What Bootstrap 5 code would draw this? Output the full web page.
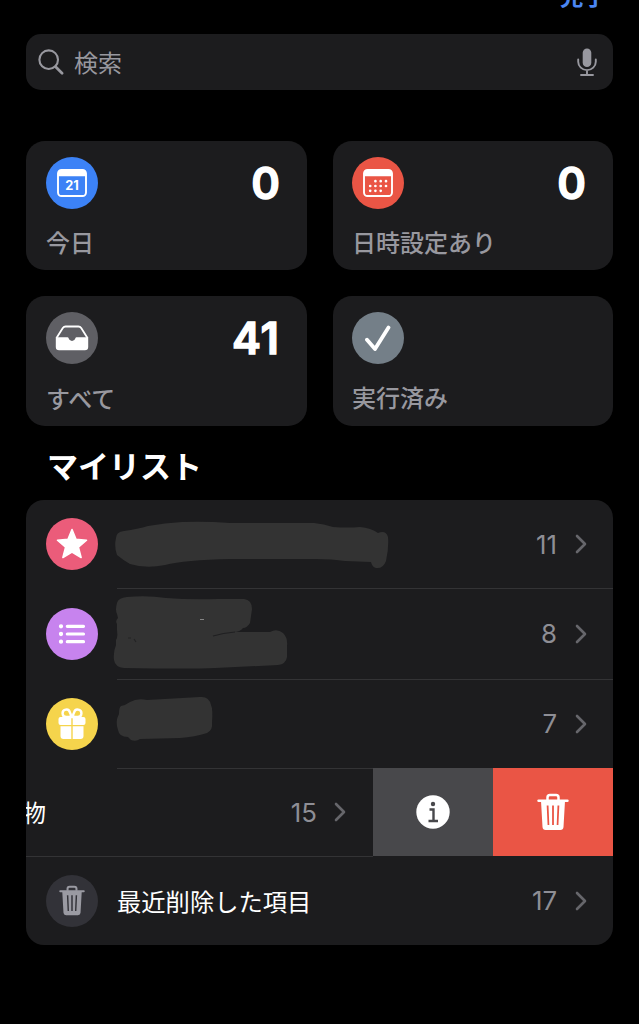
<!DOCTYPE html>
<html lang="ja" data-bs-theme="dark">
<head>
<meta charset="utf-8">
<meta name="viewport" content="width=device-width, initial-scale=1">
<title>リマインダー</title>
<link href="https://cdn.jsdelivr.net/npm/bootstrap@5.3.0/dist/css/bootstrap.min.css" rel="stylesheet">
<style>
body{background:#000;color:#fff;font-family:Inter,"Noto Sans CJK JP",sans-serif;height:1024px;overflow:hidden}
svg{display:block;flex:none}
.screen{padding:0 26px}
.topbar{height:34px;overflow:hidden;padding-right:6px}
.done{color:#4b86f3;font-size:23.5px;font-weight:700;line-height:30px;margin-top:-18px}
.search{height:56px;background:#1c1c1e;border-radius:15px;color:#98989f;padding:0 16px 0 12px;font-size:24px}
.search-hint{margin-left:9px;padding-top:3px}
.tiles{display:grid;grid-template-columns:281px 280px;grid-template-rows:129px 130px;gap:26px;margin-top:51px}
.tile{background:#1c1c1e;border-radius:19px;padding:16px 27px 0 20px}
.tile:nth-child(even){padding-left:19px}
.disc{width:52px;height:52px;border-radius:50%;flex:none;display:flex;align-items:center;justify-content:center}
.blue{background:#3c82f6}.red{background:#ea5545}.grey{background:#5f5f64}.slate{background:#747f88}
.pink{background:#eb5c7a}.purple{background:#c783ee}.yellow{background:#f5d44c}.dim{background:#323238}
.total{font-size:43.5px;font-weight:600;line-height:53px;-webkit-text-stroke:1.4px #fff}
.total-wide{letter-spacing:1px}
.tile-label{font-size:24px;font-weight:500;color:#98989f;line-height:32px;margin-top:18px}
.tiles .low{margin-top:19px}
.heading{font-size:31px;font-weight:700;line-height:40px;margin:21px 0 13px 21px}
.lists{background:#1c1c1e;border-radius:18px;overflow:hidden}
.item{padding-left:20px}
.item-body{margin-left:19px;padding-right:26px;box-shadow:0 1px 0 #333335;font-size:24.3px}
.h88{height:88px}.h89{height:89px}.h91{height:91px}
.amount{color:#8e8e95;font-size:25.8px;margin-right:18px;padding-top:2px}
.scribble{margin-left:-4px}
.swiped{width:347px;padding-right:27px;font-size:24px;box-shadow:0 1px 0 #333335}
.swiped .cut{margin-left:-4px;padding-top:3px}
.swiped .amount{margin-right:17px}
.act{width:120px}
.info{background:#48484b}
.last-body{box-shadow:none}
.last-title{padding-top:3px}
</style>
</head>
<body>
<svg width="0" height="0" class="d-none">
  <symbol id="chev" viewBox="0 0 12 20"><path d="M2 2 10 10l-8 8" fill="none" stroke="#66666b" stroke-width="2.600" stroke-linecap="round" stroke-linejoin="round"/></symbol>
  <symbol id="trash" viewBox="0 0 32 38"><path d="M10.500 7V4.500Q10.500 2 13 2h6q2.500 0 2.500 2.500V7" fill="none" stroke="currentColor" stroke-width="2.500"/><path d="M1.500 7.700h29" stroke="currentColor" stroke-width="2.400" stroke-linecap="round"/><path fill="currentColor" fill-rule="evenodd" d="M4 8h24l-1.500 26q-.2 3-3.200 3H8.700q-3 0-3.200-3ZM9.700 12.500l.9 19.500h1.700l-.8-19.500ZM15.100 12.500V32h1.800V12.500ZM20.500 12.500 19.700 32h1.700l.9-19.500Z"/></symbol>
</svg>
<main class="screen">
  <header class="topbar d-flex justify-content-end align-items-start"><span class="done">完了</span></header>

  <div class="search d-flex align-items-center">
    <svg width="27" height="27" viewBox="0 0 27 27" fill="none" stroke="currentColor" stroke-linecap="round"><circle cx="10.700" cy="10.700" r="9.300" stroke-width="2.100"/><path d="m17.600 17.700 6.500 6.500" stroke-width="2.800"/></svg>
    <span class="search-hint">検索</span>
    <svg class="ms-auto" width="20" height="30" viewBox="0 0 20 30"><rect x="5.700" y="1.500" width="8.600" height="18.500" rx="4.300" fill="#98989f"/><path d="M1.200 12.500V14.800a8.800 8.300 0 0 0 17.600 0V12.500M10 23.200V28M4 28h12" fill="none" stroke="#98989f" stroke-width="1.900" stroke-linecap="round"/></svg>
  </div>

  <section class="tiles">
    <div class="tile">
      <div class="d-flex justify-content-between">
        <span class="disc blue"><svg width="30" height="28" viewBox="0 0 30 28"><rect x="1" y="1" width="28" height="26" rx="3.500" fill="none" stroke="#fff" stroke-width="1.900"/><path d="M1 7.300V4q0-3 3-3h22q3 0 3 3v3.300Z" fill="#fff"/><text x="15" y="21.300" text-anchor="middle" font-size="12.800" font-weight="700" fill="#fff">21</text></svg></span>
        <span class="total">0</span>
      </div>
      <div class="tile-label">今日</div>
    </div>
    <div class="tile">
      <div class="d-flex justify-content-between">
        <span class="disc red"><svg width="30" height="28" viewBox="0 0 30 28"><rect x="1" y="1" width="28" height="26" rx="3.500" fill="none" stroke="#fff" stroke-width="1.900"/><path d="M1 7.300V4q0-3 3-3h22q3 0 3 3v3.300Z" fill="#fff"/><path d="M12.400 12.200h.01M17.700 12.200h.01M23 12.200h.01M7.200 17h.01M12.400 17h.01M17.700 17h.01M23 17h.01M7.200 21.800h.01M12.400 21.800h.01M17.700 21.800h.01" stroke="#fff" stroke-width="2.700" stroke-linecap="round"/></svg></span>
        <span class="total">0</span>
      </div>
      <div class="tile-label">日時設定あり</div>
    </div>
    <div class="tile">
      <div class="d-flex justify-content-between">
        <span class="disc grey"><svg width="34" height="26" viewBox="0 0 34 26"><path d="M1.500 13 7.800 3q1-1.500 2.800-1.500h12.800q1.800 0 2.800 1.500l6.300 10" fill="none" stroke="#fff" stroke-width="1.800"/><path d="M.8 12.300h11.700q.9 0 1.100 1a3.500 3.500 0 0 0 6.800 0q.2-1 1.100-1h11.700V22q0 3.300-3.300 3.300H4.100Q.8 25.300.8 22Z" fill="#fff"/></svg></span>
        <span class="total total-wide">41</span>
      </div>
      <div class="tile-label low">すべて</div>
    </div>
    <div class="tile">
      <span class="disc slate"><svg width="26" height="26" viewBox="0 0 26 26"><path d="m2 14.800 8 9.200L23.500 2.500" fill="none" stroke="#fff" stroke-width="3.800" stroke-linecap="round" stroke-linejoin="round"/></svg></span>
      <div class="tile-label low">実行済み</div>
    </div>
  </section>

  <h2 class="heading">マイリスト</h2>

  <section class="lists">
    <div class="item h88 d-flex align-items-center">
      <span class="disc pink"><svg width="32" height="32" viewBox="0 0 32 32"><path d="m16 1.500 4 9.900 10.500.8-8.100 7 2.700 10.300L16 24l-9.100 5.500 2.700-10.300-8.100-7 10.500-.8Z" fill="#fff" stroke="#fff" stroke-width="1.600" stroke-linejoin="round"/></svg></span>
      <div class="item-body h88 flex-grow-1 d-flex align-items-center">
        <svg class="scribble" width="280" height="88" viewBox="113 500 280 88"><path fill="#333" d="M116 538Q116 532 124 531Q138 529 148 526Q165 523 182 522Q205 521 230 523L314 523Q324 524 333 527Q347 528 360 527Q371 528 378 533Q386 530 388 537Q389 547 386 561Q383 569 376 568Q372 567 371 562L345 561Q333 559 315 559L230 559Q185 560 165 565Q146 569 130 564Q123 560 117 555Q114 547 116 538Z"/></svg>
        <span class="amount ms-auto">11</span><svg width="12" height="20"><use href="#chev"/></svg>
      </div>
    </div>
    <div class="item h91 d-flex align-items-center">
      <span class="disc purple"><svg width="28" height="22" viewBox="0 0 28 22"><path d="M9.300 3.300h16.200M9.300 11h16.200M9.300 18.700h16.200" stroke="#fff" stroke-width="3.200" stroke-linecap="round"/><path d="M3 3.300h.01M3 11h.01M3 18.700h.01" stroke="#fff" stroke-width="4.300" stroke-linecap="round"/></svg></span>
      <div class="item-body h91 flex-grow-1 d-flex align-items-center">
        <svg class="scribble" width="280" height="91" viewBox="113 588 280 91"><path fill="#333" d="M117 603Q118 598 127 597Q147 595 166 598Q190 600 218 599L244 599Q252 600 252 609L250 623Q247 628 243 628Q240 632 234 632L270 632Q277 628 283 633Q288 638 287 646V657Q286 664 278 665L215 668Q190 669 124 668Q115 667 114 660Q113 652 116 645V640Q118 638 117 630V624Q115 621 118 618L117 614Q115 610 117 603Z"/><path d="M128 638h3M134 639l2 3" stroke="#242425" stroke-width="1.200"/><path d="M213 636q10-3 22-4" fill="none" stroke="#202022" stroke-width="1.200"/><path d="M200 619.500h4" stroke="#858585" stroke-width="1"/></svg>
        <span class="amount ms-auto">8</span><svg width="12" height="20"><use href="#chev"/></svg>
      </div>
    </div>
    <div class="item h89 d-flex align-items-center">
      <span class="disc yellow"><svg width="28" height="32" viewBox="0 0 28 32"><g fill="none" stroke="#fff" stroke-width="2.400"><path d="M13 9H8.300a3.700 3.700 0 1 1 3.600-4.500Q13 6 13 9ZM15 9h4.700a3.700 3.700 0 1 0-3.600-4.500Q15 6 15 9Z"/></g><path d="M13.300 9v8H2.500Q.5 17 .5 15v-4q0-2 2-2ZM14.700 9v8h10.800q2 0 2-2v-4q0-2-2-2ZM2.500 18.200h10.800V31H5.500q-3 0-3-3ZM14.700 18.200h10.800V28q0 3-3 3h-7.800Z" fill="#fff"/></svg></span>
      <div class="item-body h89 flex-grow-1 d-flex align-items-center">
        <svg class="scribble" width="280" height="89" viewBox="113 679 280 89"><path fill="#333" d="M121 706Q126 705 130 702Q137 698 147 700L200 697Q209 696 211 705Q213 709 212 723Q213 730 207 733Q195 737 180 738L140 739Q136 742 131 740L128 737Q119 737 118 730Q115 721 119 714Q119 707 121 706Z"/></svg>
        <span class="amount ms-auto">7</span><svg width="12" height="20"><use href="#chev"/></svg>
      </div>
    </div>
    <div class="h88 d-flex">
      <div class="swiped d-flex align-items-center">
        <span class="cut">物</span><span class="amount ms-auto">15</span><svg width="12" height="20"><use href="#chev"/></svg>
      </div>
      <div class="act info d-flex align-items-center justify-content-center"><svg width="34" height="34" viewBox="0 0 34 34"><circle cx="17" cy="17" r="16.700" fill="#fff"/><circle cx="17" cy="9" r="2.200" fill="#48484b"/><path d="M13.500 14.500h4V26M12.500 26h9.500" fill="none" stroke="#48484b" stroke-width="2.400"/></svg></div>
      <div class="act red d-flex align-items-center justify-content-center"><svg width="32" height="38"><use href="#trash"/></svg></div>
    </div>
    <div class="item h89 d-flex align-items-center">
      <span class="disc dim"><svg width="26" height="31" style="color:#9a9aa2"><use href="#trash"/></svg></span>
      <div class="item-body last-body h89 flex-grow-1 d-flex align-items-center">
        <span class="last-title">最近削除した項目</span><span class="amount ms-auto">17</span><svg width="12" height="20"><use href="#chev"/></svg>
      </div>
    </div>
  </section>
</main>
<script src="https://cdn.jsdelivr.net/npm/bootstrap@5.3.0/dist/js/bootstrap.bundle.min.js"></script>
</body>
</html>
